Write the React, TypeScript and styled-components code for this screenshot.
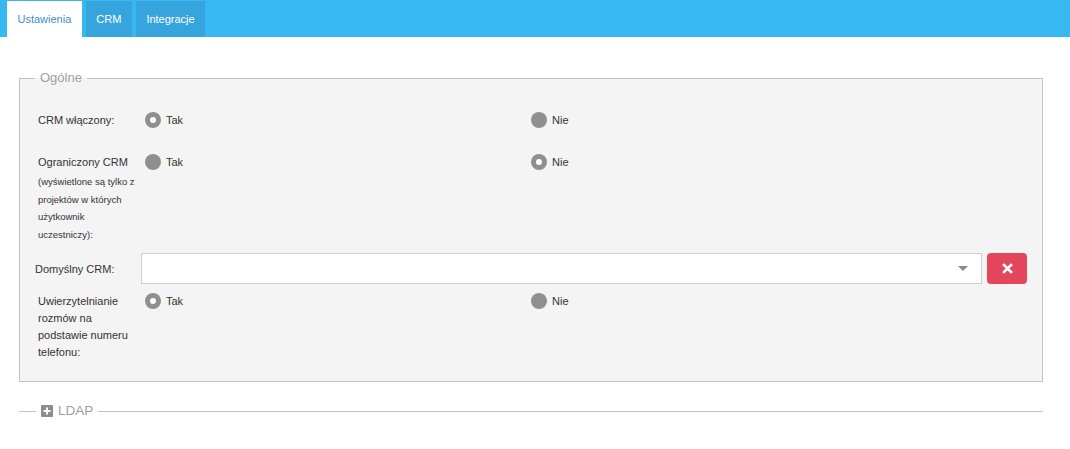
import React from "react";
import styled, { createGlobalStyle } from "styled-components";

const GlobalStyle = createGlobalStyle`
  body {
    margin: 0;
    background: #fff;
    font-family: "Liberation Sans", Arial, sans-serif;
    font-size: 11px;
    color: #333;
  }
`;

const TabBar = styled.div`
  display: flex;
  align-items: flex-end;
  gap: 4px;
  height: 37px;
  padding-left: 7px;
  background: #38b8f2;
`;

const Tab = styled.div<{ $active?: boolean }>`
  display: flex;
  align-items: center;
  height: 36px;
  padding: 0 10.5px;
  font-size: 11px;
  background: ${(p) => (p.$active ? "#fff" : "#36a4dd")};
  color: ${(p) => (p.$active ? "#3b8fca" : "#fff")};
`;

const Content = styled.div`
  padding: 33px 27px 0 19px;
`;

const Fieldset = styled.fieldset<{ $open?: boolean }>`
  margin: 0;
  padding: 0;
  min-width: 0;
  border: 1px solid #c3c3c3;
  background: #f4f4f4;
  ${(p) =>
    !p.$open &&
    `
    border-left: none;
    border-right: none;
    border-bottom: none;
    background: transparent;
  `}
`;

const Legend = styled.legend<{ $open?: boolean }>`
  display: flex;
  align-items: center;
  gap: 5px;
  margin-left: ${(p) => (p.$open ? "15px" : "17px")};
  padding: 0 5px;
  font-size: ${(p) => (p.$open ? "13px" : "13.5px")};
  line-height: 16px;
  color: #a0a0a0;
`;

const PlusBox = styled.span`
  display: inline-flex;
  align-items: center;
  justify-content: center;
  width: 12px;
  height: 12px;
  border-radius: 1px;
  background: #8c8c8c;
`;

const Form = styled.div`
  display: grid;
  grid-template-columns: 107px 386px 1fr;
  padding: 26px 15px 20px 18px;
`;

const Label = styled.div`
  width: 100px;
  line-height: 17px;
`;

const Note = styled.div`
  font-size: 9.5px;
  line-height: 17.5px;
  margin-top: 2px;
`;

const Option = styled.label`
  display: flex;
  align-items: flex-start;
  gap: 5px;
  line-height: 17px;
`;

const Radio = styled.span<{ $checked?: boolean }>`
  position: relative;
  flex: none;
  width: 16px;
  height: 16px;
  border-radius: 50%;
  background: #8f8f8f;
  &::after {
    content: "";
    display: ${(p) => (p.$checked ? "block" : "none")};
    position: absolute;
    left: 5px;
    top: 5px;
    width: 6px;
    height: 6px;
    border-radius: 50%;
    background: #fff;
  }
`;

const Spacer = styled.div<{ $h: number }>`
  grid-column: 1 / -1;
  height: ${(p) => p.$h}px;
`;

const SelectRow = styled.div`
  grid-column: 2 / -1;
  display: flex;
  gap: 5px;
  margin-left: -4px;
`;

const SelectBox = styled.div`
  flex: 1;
  display: flex;
  align-items: center;
  justify-content: flex-end;
  height: 31px;
  padding-right: 13px;
  box-sizing: border-box;
  background: #fff;
  border: 1px solid #cfcfcf;
`;

const Caret = styled.span`
  width: 0;
  height: 0;
  border-left: 5px solid transparent;
  border-right: 5px solid transparent;
  border-top: 5px solid #888;
`;

const DangerButton = styled.button`
  display: flex;
  align-items: center;
  justify-content: center;
  width: 40px;
  height: 31px;
  padding: 0;
  border: none;
  border-radius: 4px;
  background: #e4475b;
`;

const CenterLabel = styled.div`
  display: flex;
  align-items: center;
  height: 31px;
  margin-left: -3px;
`;

function Choice({ checked, text }: { checked?: boolean; text: string }) {
  return (
    <Option>
      <Radio $checked={checked} />
      <span>{text}</span>
    </Option>
  );
}

export default function App() {
  return (
    <>
      <GlobalStyle />
      <TabBar>
        <Tab $active>Ustawienia</Tab>
        <Tab>CRM</Tab>
        <Tab>Integracje</Tab>
      </TabBar>
      <Content>
        <Fieldset $open>
          <Legend $open>Ogólne</Legend>
          <Form>
            <Label>CRM włączony:</Label>
            <Choice checked text="Tak" />
            <Choice text="Nie" />
            <Spacer $h={25} />
            <Label>
              Ograniczony CRM
              <Note>(wyświetlone są tylko z projektów w których użytkownik uczestniczy):</Note>
            </Label>
            <Choice text="Tak" />
            <Choice checked text="Nie" />
            <Spacer $h={10} />
            <CenterLabel>Domyślny CRM:</CenterLabel>
            <SelectRow>
              <SelectBox>
                <Caret />
              </SelectBox>
              <DangerButton>
                <svg width="11" height="11" viewBox="0 0 11 11">
                  <path d="M2 2 L9 9 M9 2 L2 9" stroke="#fff" strokeWidth="2.6" strokeLinecap="square" />
                </svg>
              </DangerButton>
            </SelectRow>
            <Spacer $h={9} />
            <Label>Uwierzytelnianie rozmów na podstawie numeru telefonu:</Label>
            <Choice checked text="Tak" />
            <Choice text="Nie" />
          </Form>
        </Fieldset>
        <Spacer $h={21} />
        <Fieldset>
          <Legend>
            <PlusBox>
              <svg width="8" height="8" viewBox="0 0 8 8">
                <path d="M4 0.5 V7.5 M0.5 4 H7.5" stroke="#fff" strokeWidth="2" />
              </svg>
            </PlusBox>
            LDAP
          </Legend>
        </Fieldset>
      </Content>
    </>
  );
}
